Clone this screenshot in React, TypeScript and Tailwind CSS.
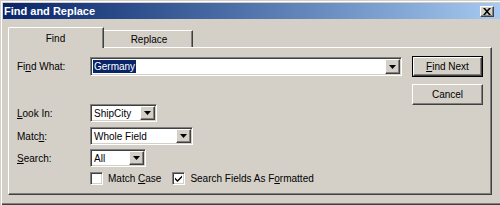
import React from "react";

const sunken =
  "border border-t-[#808080] border-l-[#808080] border-b-white border-r-white shadow-[inset_1px_1px_0_#404040,inset_-1px_-1px_0_#d4d0c8]";
const raised =
  "border border-t-white border-l-white border-b-[#404040] border-r-[#404040] shadow-[inset_-1px_-1px_0_#808080]";

function Arrow() {
  return (
    <div className={`w-[15px] h-full bg-[#d4d0c8] flex items-center justify-center ${raised}`}>
      <svg width="7" height="4" viewBox="0 0 7 4">
        <path d="M0 0H7L3.5 4Z" fill="#000" />
      </svg>
    </div>
  );
}

function Combo({ w, h, text, selected }: { w: string; h: string; text: string; selected?: boolean }) {
  return (
    <div className={`${w} ${h} bg-white flex items-stretch ${sunken}`}>
      <div className="flex-1 flex items-center pl-[2px]">
        {selected ? (
          <span className="bg-[#0a246a] text-white px-[1px] leading-[13px]">{text}</span>
        ) : (
          <span className="px-[1px]">{text}</span>
        )}
      </div>
      <div className="p-[1px] h-full">
        <Arrow />
      </div>
    </div>
  );
}

function Check({ checked }: { checked?: boolean }) {
  return (
    <div className={`w-[13px] h-[13px] bg-white flex items-center justify-center ${sunken}`}>
      {checked && (
        <svg width="7" height="7" viewBox="0 0 7 7">
          <path d="M0 2.5L2.5 5L7 0.5V2.5L2.5 7L0 4.5Z" fill="#000" />
        </svg>
      )}
    </div>
  );
}

export default function App() {
  return (
    <div className="w-[500px] h-[205px] bg-[#d4d0c8] overflow-hidden font-['Liberation_Sans',Arial,sans-serif] text-[10px] text-black shadow-[inset_1px_1px_0_#d4d0c8,inset_2px_2px_0_#ffffff,inset_0_-1px_0_#404040,inset_0_-2px_0_#808080]">
      {/* Title bar */}
      <div className="ml-[3px] pt-[3px]">
        <div className="h-[16px] flex items-center justify-between pl-[1px] pr-[6px] bg-linear-to-r from-[#0a246a] to-[#a6caf0]">
          <span className="text-white font-bold text-[11px] leading-none">Find and Replace</span>
          <div className={`w-[14px] h-[11px] bg-[#d4d0c8] flex items-center justify-center ${raised}`}>
            <svg width="8" height="7" viewBox="0 0 8 7">
              <path d="M0 0H2L4 2.2L6 0H8L5 3.5L8 7H6L4 4.8L2 7H0L3 3.5Z" fill="#000" />
            </svg>
          </div>
        </div>
      </div>

      {/* Tabs */}
      <div className="ml-[8px] mt-[8px]">
        <div className="flex items-end -mb-px relative z-10">
          <div className="w-[96px] h-[21px] bg-[#d4d0c8] border-t border-l border-t-white border-l-white border-r border-r-[#404040] rounded-tl-[2px] shadow-[inset_-1px_0_0_#808080] flex items-center justify-center pr-[1px]">
            Find
          </div>
          <div className="w-[89px] h-[17px] mb-px bg-[#d4d0c8] border-t border-t-white border-r border-r-[#404040] shadow-[inset_-1px_0_0_#808080] flex items-center justify-center pl-[2px]">
            Replace
          </div>
        </div>

        {/* Panel */}
        <div className="w-[484px] h-[148px] border-t border-l border-t-white border-l-white border-r border-b border-r-[#404040] border-b-[#404040] shadow-[inset_-1px_-1px_0_#808080] flex justify-between">
          <div className="pl-[8px] pt-[9px] flex flex-col">
            <div className="flex items-center h-[19px]">
              <div className="w-[73px]">
                Fi<span className="underline">n</span>d What:
              </div>
              <Combo w="w-[312px]" h="h-[19px]" text="Germany" selected />
            </div>
            <div className="flex items-center h-[18px] mt-[28px]">
              <div className="w-[73px]">
                <span className="underline">L</span>ook In:
              </div>
              <Combo w="w-[67px]" h="h-[18px]" text="ShipCity" />
            </div>
            <div className="flex items-center h-[18px] mt-[5px]">
              <div className="w-[73px]">
                Matc<span className="underline">h</span>:
              </div>
              <Combo w="w-[103px]" h="h-[18px]" text="Whole Field" />
            </div>
            <div className="flex items-center h-[18px] mt-[4px]">
              <div className="w-[73px]">
                <span className="underline">S</span>earch:
              </div>
              <Combo w="w-[56px]" h="h-[18px]" text="All" />
            </div>
            <div className="flex items-center h-[13px] mt-[5px] pl-[73px]">
              <Check />
              <span className="ml-[5px]">
                Match <span className="underline">C</span>ase
              </span>
              <div className="ml-[11px]">
                <Check checked />
              </div>
              <span className="ml-[5px]">
                Search Fields As F<span className="underline">o</span>rmatted
              </span>
            </div>
          </div>
          <div className="pt-[8px] pr-[8px] flex flex-col">
            <div className="w-[71px] h-[21px] border border-black">
              <div className={`w-full h-full flex items-center justify-center ${raised}`}>
                <span>
                  <span className="underline">F</span>ind Next
                </span>
              </div>
            </div>
            <div className={`w-[71px] h-[21px] mt-[7px] flex items-center justify-center ${raised}`}>
              Cancel
            </div>
          </div>
        </div>
      </div>
    </div>
  );
}
